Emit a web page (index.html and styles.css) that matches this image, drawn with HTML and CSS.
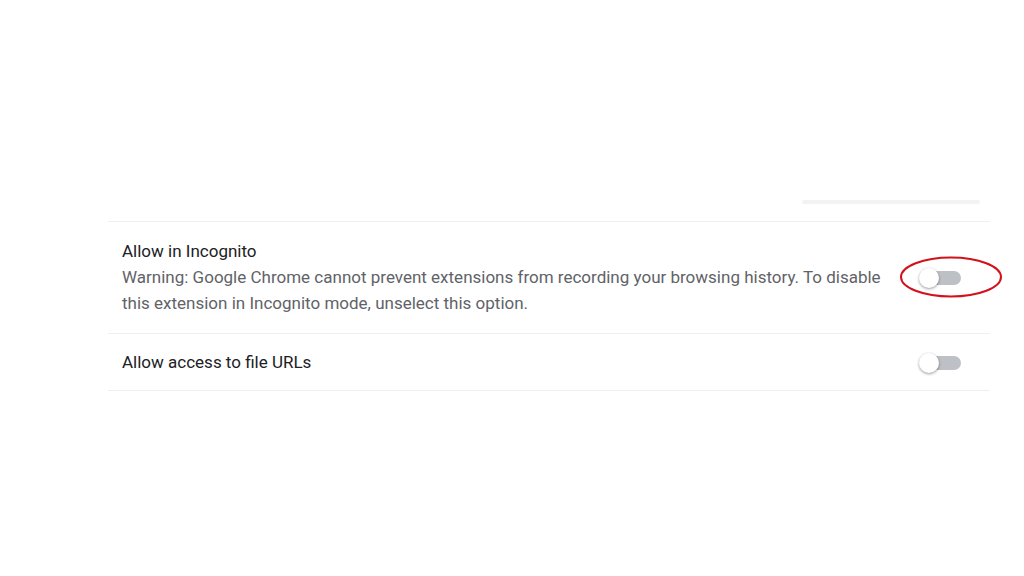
FILE: index.html
```html
<!DOCTYPE html>
<html lang="en">
<head>
  <meta charset="UTF-8" />
  <title>Extension details</title>
  <link rel="stylesheet" href="styles.css">
</head>
<body>
  <div class="settings">
    <div class="top-bar"></div>

    <div class="row">
      <div class="row-text">
        <div class="label">Allow in Incognito</div>
        <div class="sub">Warning: Google Chrome cannot prevent extensions from recording your browsing history. To disable this extension in Incognito mode, unselect this option.</div>
      </div>
      <div class="toggle-wrap">
        <div class="toggle"><span class="knob"></span></div>
        <svg class="circled" width="104" height="44" viewBox="0 0 104 44">
          <ellipse cx="52" cy="22" rx="50" ry="19.5" fill="none" stroke="#d2121b" stroke-width="2" />
        </svg>
      </div>
    </div>

    <div class="row">
      <div class="row-text">
        <div class="label">Allow access to file URLs</div>
      </div>
      <div class="toggle-wrap">
        <div class="toggle"><span class="knob"></span></div>
      </div>
    </div>
  </div>
</body>
</html>
```

FILE: styles.css
```css
body {
  margin: 0;
  background: #ffffff;
  font-family: Roboto, "Liberation Sans", sans-serif;
  color: #202124;
}

.settings {
  width: 882px;
  margin: 0 0 0 108px;
  padding-top: 200px;
}

.top-bar {
  width: 178px;
  height: 4px;
  background: #f1f3f4;
  margin-left: auto;
  margin-right: 10px;
  margin-bottom: 17px;
  border-radius: 2px;
}

.row {
  display: flex;
  align-items: center;
  border-top: 1px solid #eeeff0;
  padding: 16px 29px 17px 14px;
}

.row:last-child {
  border-bottom: 1px solid #eeeff0;
  padding: 15px 29px 15px 14px;
}

.row-text {
  flex: 1;
  font-size: 17px;
  line-height: 26px;
  padding-right: 30px;
}

.label {
  color: #202124;
}

.sub {
  color: #5f6368;
}

.toggle-wrap {
  position: relative;
  width: 42px;
  height: 22px;
  display: flex;
  align-items: center;
  margin-top: 2px;
}

.toggle {
  position: relative;
  width: 40px;
  height: 14px;
  margin-left: 2px;
  border-radius: 7px;
  background: #bdc1c6;
}

.knob {
  position: absolute;
  left: -2px;
  top: -3px;
  width: 20px;
  height: 20px;
  border-radius: 50%;
  background: #ffffff;
  box-shadow: 0 1px 3px rgba(0, 0, 0, 0.4);
}

.circled {
  position: absolute;
  left: -20px;
  top: -12px;
}
```
